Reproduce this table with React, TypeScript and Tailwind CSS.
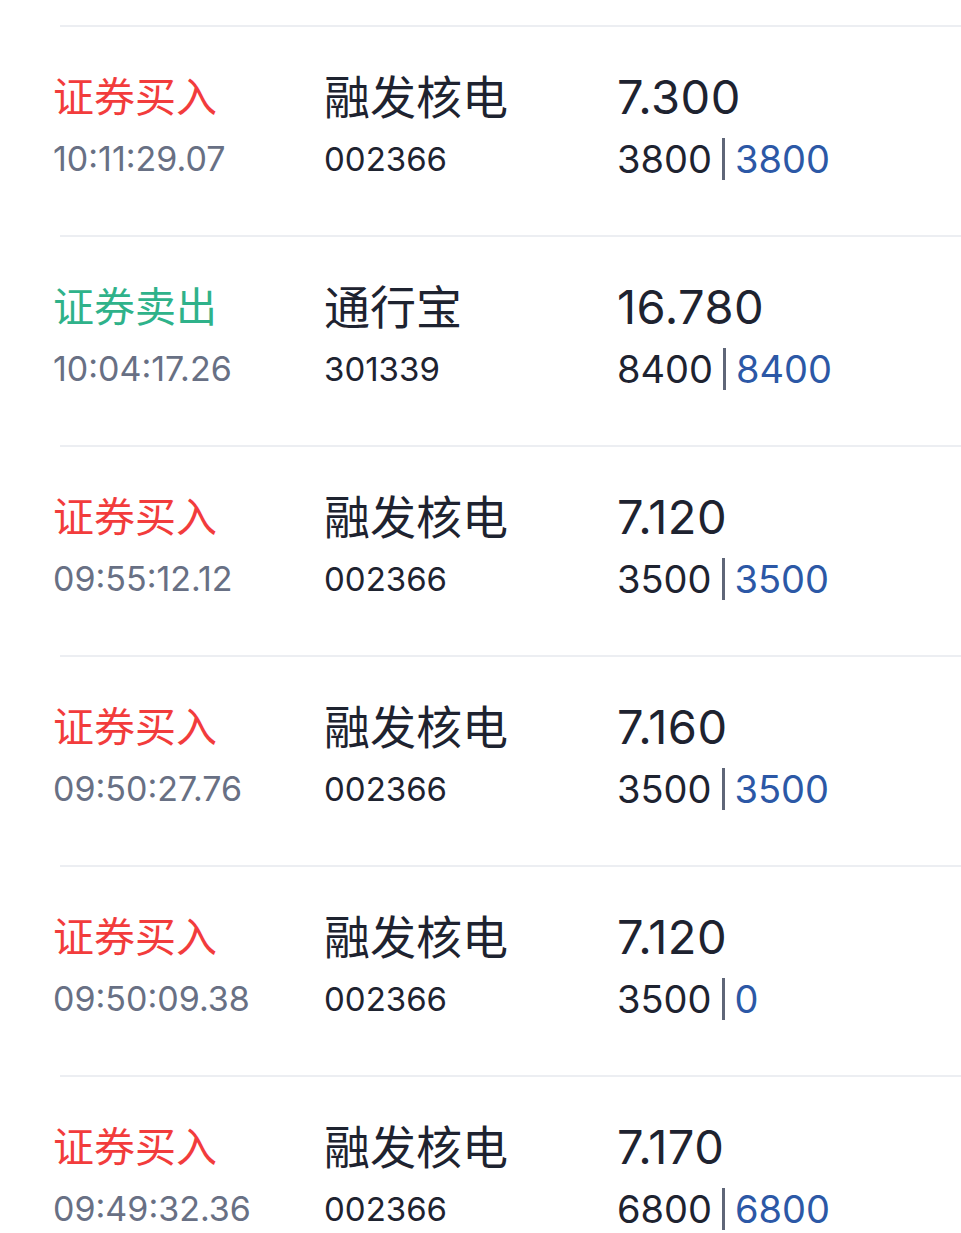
const trades = [
  { side: '证券买入', time: '10:11:29.07', name: '融发核电', code: '002366', price: '7.300', qty: '3800', done: '3800' },
  { side: '证券卖出', time: '10:04:17.26', name: '通行宝', code: '301339', price: '16.780', qty: '8400', done: '8400' },
  { side: '证券买入', time: '09:55:12.12', name: '融发核电', code: '002366', price: '7.120', qty: '3500', done: '3500' },
  { side: '证券买入', time: '09:50:27.76', name: '融发核电', code: '002366', price: '7.160', qty: '3500', done: '3500' },
  { side: '证券买入', time: '09:50:09.38', name: '融发核电', code: '002366', price: '7.120', qty: '3500', done: '0' },
  { side: '证券买入', time: '09:49:32.36', name: '融发核电', code: '002366', price: '7.170', qty: '6800', done: '6800' },
];

const cjk = { fontFamily: 'Inter, "Noto Sans CJK SC", sans-serif' };

export default function App() {
  return (
    <div className="min-h-screen bg-white pt-[25px] overflow-hidden" style={cjk}>
      {trades.map((t, i) => (
        <div key={i} className="h-[210px]">
          {/* divider */}
          <div className="ml-[60px] h-[2px] bg-[#eceef2]" />

          <div className="flex pl-[53px] pt-[42px]">
            <div className="w-[271px]">
              <p
                className={`h-[56px] leading-[56px] text-[41px] ${
                  t.side === '证券卖出' ? 'text-[#2fb28a]' : 'text-[#f23c3c]'
                }`}
              >
                {t.side}
              </p>
              <p className="mt-[12px] h-[44px] leading-[44px] text-[34px] text-[#687084]">{t.time}</p>
            </div>

            <div className="w-[293px]">
              <p className="h-[56px] leading-[56px] text-[46px] text-[#1e2330]">{t.name}</p>
              <p className="mt-[12px] h-[44px] leading-[44px] text-[33px] text-[#1e2330]">{t.code}</p>
            </div>

            <div>
              <p className="h-[56px] leading-[56px] text-[47px] tracking-[0.5px] text-[#1e2330]">{t.price}</p>
              <div className="mt-[12px] h-[44px] flex items-center text-[38px] leading-[44px]">
                <span className="text-[#1e2330]">{t.qty}</span>
                <span className="mx-[10px] h-[42px] w-[3px] bg-[#5f6678]" />
                <span className="text-[#2c58a6]">{t.done}</span>
              </div>
            </div>
          </div>
        </div>
      ))}
    </div>
  );
}
